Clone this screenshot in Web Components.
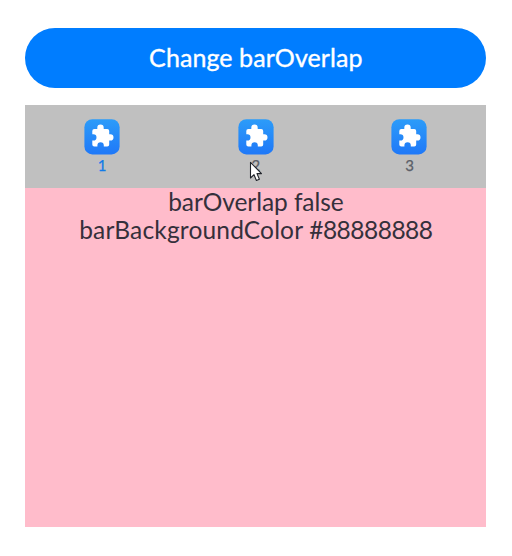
<!DOCTYPE html>
<html lang="en">
<head>
<meta charset="utf-8">
<title>Tabs barOverlap</title>
<style>
html, body { margin: 0; background: #fff; }
body { width: 512px; height: 556px; overflow: hidden; }
</style>
</head>
<body>
<demo-page></demo-page>
<script>
const define = (name, html) => {
  const template = document.createElement('template');
  template.innerHTML = html;
  customElements.define(name, class extends HTMLElement {
    constructor() {
      super();
      this.attachShadow({ mode: 'open' }).append(template.content.cloneNode(true));
    }
  });
};

define('pill-button', `
<style>
:host { display: block; height: 59.5px; }
button { display: flex; align-items: center; justify-content: center; width: 100%; height: 100%; margin: 0; padding: 0 0 2px; border: 0; border-radius: 30px; background: #007dff; color: #fff; font: 400 25px/30px Lato, sans-serif; letter-spacing: .08px; -webkit-text-stroke: .35px #fff; }
</style>
<button><slot></slot></button>`);

define('puzzle-icon', `
<style>:host { display: block; width: 36px; height: 36px; } svg { display: block; }</style>
<svg width="36" height="36" viewBox="0 0 36 36">
<defs><linearGradient id="g" x1="0" y1="0" x2="0" y2="1"><stop offset="0" stop-color="#2c9cf9"/><stop offset="1" stop-color="#1f78f8"/></linearGradient></defs>
<rect x=".4" y=".2" width="35.2" height="35.2" rx="8" fill="url(#g)"/>
<path fill="#fff" d="M10.3 10H13.3V8.8a3.2 3.2 0 0 1 6.4 0V10H23.2a2 2 0 0 1 2 2V15.3h1.2a3.1 3.1 0 0 1 0 6.2H25.2V25.6a2 2 0 0 1-2 2H19.8V26.5a3.2 3.2 0 0 0-6.4 0V27.6H10.3a2 2 0 0 1-2-2V21.5H9.4a3.1 3.1 0 0 0 0-6.2H8.3V12a2 2 0 0 1 2-2Z"/>
</svg>`);

define('tab-item', `
<style>
:host { display: flex; flex: 1; flex-direction: column; align-items: center; padding-top: 14px; color: #5b5f68; font: 400 15px/18px Lato, sans-serif; }
:host([selected]) { color: #117be9; }
span { margin-top: 1px; -webkit-text-stroke: .25px; }
</style>
<puzzle-icon></puzzle-icon><span><slot></slot></span>`);

define('tab-bar', `
<style>:host { display: flex; height: 83px; background: #c0c0c0; }</style>
<slot></slot>`);

define('tab-content', `
<style>
:host { display: flow-root; height: 339px; background: #ffbccb; color: #35303b; text-align: center; font: 400 24.5px/27.5px Lato, sans-serif; }
</style>
<slot></slot>`);

define('mouse-pointer', `
<style>:host { display: block; position: absolute; left: 249px; top: 161px; } svg { display: block; }</style>
<svg width="15" height="22" viewBox="0 0 15 22"><path d="M1.5 1.3V17L5 13.7l2.4 5.8 3-1.3L8 12.6h4.5Z" fill="#fff" stroke="#20242b" stroke-width="1.1" stroke-linejoin="round"/></svg>`);

define('demo-page', `
<style>
:host { display: block; position: relative; box-sizing: border-box; width: 512px; height: 556px; padding: 28px 25.7px 0 25.4px; }
main { display: flex; flex-direction: column; gap: 17.5px; }
tab-content { letter-spacing: -.07px; }
tab-content div { white-space: nowrap; }
.name { letter-spacing: .17px; }
.value { letter-spacing: -.51px; }
</style>
<main>
<pill-button>Change barOverlap</pill-button>
<section>
<tab-bar><tab-item selected>1</tab-item><tab-item>2</tab-item><tab-item>3</tab-item></tab-bar>
<tab-content><div>barOverlap false</div><div><span class="name">barBackgroundColor </span><span class="value">#88888888</span></div></tab-content>
</section>
</main>
<mouse-pointer></mouse-pointer>`);
</script>
</body>
</html>
